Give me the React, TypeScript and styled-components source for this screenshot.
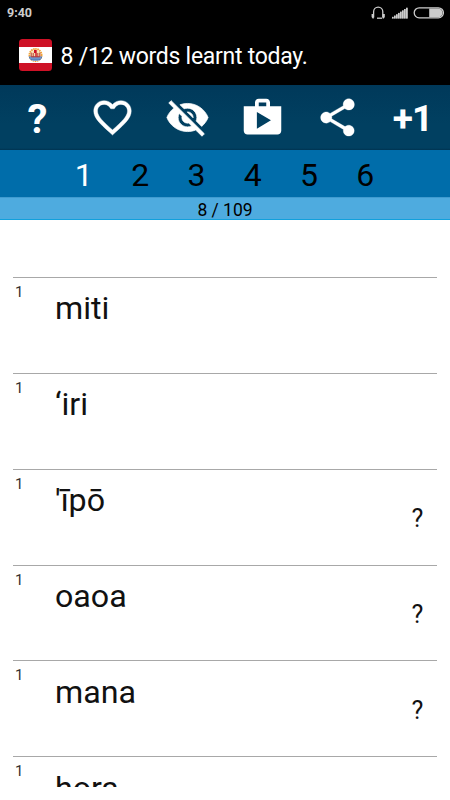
import React from 'react';
import styled, { createGlobalStyle } from 'styled-components';

const GlobalStyle = createGlobalStyle`
  * { box-sizing: border-box; }
  body { margin: 0; background: #fff; font-family: Roboto, "Noto Sans", sans-serif; }
`;

const Screen = styled.div`
  width: 450px;
  height: 800px;
  display: flex;
  flex-direction: column;
  overflow: hidden;
  background: #fff;
`;

const StatusBar = styled.div`
  height: 25px;
  flex: none;
  display: flex;
  align-items: center;
  justify-content: space-between;
  padding: 1px 6px 0 7px;
  background: #000;
  color: #cdcdcd;
`;

const Clock = styled.span`
  font-size: 12.5px;
  font-weight: 700;
  line-height: 24px;
`;

const StatusIcons = styled.svg`
  display: block;
`;

const TitleBar = styled.header`
  height: 60px;
  flex: none;
  display: flex;
  align-items: center;
  padding: 0 0 0 19px;
  background: #000;
`;

const Flag = styled.svg`
  width: 33px;
  height: 32px;
  margin-right: 8.6px;
`;

const Title = styled.h1`
  margin: 4px 0 0;
  color: #fff;
  font-size: 23px;
  font-weight: 400;
  letter-spacing: -0.27px;
  line-height: 30px;
  white-space: pre;
`;

const Toolbar = styled.div`
  height: 65px;
  flex: none;
  display: grid;
  grid-template-columns: repeat(6, 75px);
  background: linear-gradient(#00395a, #014061 60%, #014061 97%, #003351);
`;

const ToolButton = styled.button`
  display: flex;
  align-items: center;
  justify-content: center;
  padding: 0;
  border: 0;
  background: none;
  color: #fff;
  font: 700 38px Roboto, sans-serif;
`;

const ToolIcon = styled.svg<{ $outline: number }>`
  width: 45px;
  height: 45px;
  fill: currentColor;
  stroke: currentColor;
  stroke-width: ${p => p.$outline};
  stroke-linejoin: round;
`;

const QuestionMark = styled.span`
  font-size: 40px;
  line-height: 45px;
  padding-top: 3px;
`;

const PlusOne = styled.span`
  font-size: 37px;
  letter-spacing: -1px;
  line-height: 45px;
  padding-top: 2px;
`;

const Levels = styled.nav`
  height: 47px;
  flex: none;
  display: grid;
  grid-template-columns: repeat(6, 56.3px);
  justify-content: center;
  padding-right: 0.8px;
  background: #006daa;
`;

const Level = styled.span<{ $active?: boolean }>`
  color: ${p => (p.$active ? '#fff' : '#000')};
  font-size: 32px;
  line-height: 50px;
  text-align: center;
`;

const Progress = styled.div`
  height: 23px;
  flex: none;
  border-top: 1px solid #3f9bd0;
  border-bottom: 1px solid #12a0dc;
  background: #4eabdf;
  color: #000;
  font-size: 17.5px;
  line-height: 25px;
  text-align: center;
`;

const WordList = styled.main`
  height: 567px;
  flex: none;
  overflow: hidden;
  padding: 57px 13px 0;
`;

const WordRow = styled.div`
  height: 95.85px;
  display: grid;
  grid-template-columns: 42px 1fr 39px;
  border-top: 1px solid #a8a8a8;
  color: #111;
`;

const Stage = styled.span`
  padding: 5px 0 0 2px;
  font-size: 15px;
  line-height: 18px;
  color: #333;
`;

const Word = styled.span`
  font-size: 32.2px;
  line-height: 38px;
  padding-top: 11.4px;
`;

const Unknown = styled.span`
  font-size: 25px;
  line-height: 30px;
  padding-top: 34.4px;
  text-align: center;
`;

const words = [
  { text: 'miti', unknown: false },
  { text: '‘iri', unknown: false },
  { text: "'īpō", unknown: true },
  { text: 'oaoa', unknown: true },
  { text: 'mana', unknown: true },
  { text: 'hora', unknown: false },
];

const iconPaths = {
  heart:
    'M16.5 3c-1.74 0-3.41.81-4.5 2.09C10.91 3.81 9.24 3 7.5 3 4.42 3 2 5.42 2 8.5c0 3.78 3.4 6.86 8.55 11.54L12 21.35l1.45-1.32C18.6 15.36 22 12.28 22 8.5 22 5.42 19.58 3 16.5 3zm-4.4 15.55l-.1.1-.1-.1C7.14 14.24 4 11.39 4 8.5 4 6.5 5.5 5 7.5 5c1.54 0 3.04.99 3.57 2.36h1.87C13.46 5.99 14.96 5 16.5 5c2 0 3.5 1.5 3.5 3.5 0 2.89-3.14 5.74-7.9 10.05z',
  hide:
    'M12 7c2.76 0 5 2.24 5 5 0 .65-.13 1.26-.36 1.83l2.92 2.92c1.51-1.26 2.7-2.89 3.43-4.75-1.73-4.39-6-7.5-11-7.5-1.4 0-2.74.25-3.98.7l2.16 2.16C10.74 7.13 11.35 7 12 7zM2 4.27l2.28 2.28.46.46C3.08 8.3 1.78 10.02 1 12c1.73 4.39 6 7.5 11 7.5 1.55 0 3.03-.3 4.38-.84l.42.42L19.73 22 21 20.73 3.27 3 2 4.27zM7.53 9.8l1.55 1.55c-.05.21-.08.43-.08.65 0 1.66 1.34 3 3 3 .22 0 .44-.03.65-.08l1.55 1.55c-.67.33-1.41.53-2.2.53-2.76 0-5-2.24-5-5 0-.79.2-1.53.53-2.2zm4.31-.78l3.15 3.15.02-.16c0-1.66-1.34-3-3-3l-.17.01z',
  shop:
    'M16 6V4c0-1.11-.89-2-2-2h-4c-1.11 0-2 .89-2 2v2H2v13c0 1.11.89 2 2 2h16c1.11 0 2-.89 2-2V6h-6zm-6-2h4v2h-4V4zM9 18V9l7.5 4.5L9 18z',
  share:
    'M18 16.08c-.76 0-1.44.3-1.96.77L8.91 12.7c.05-.23.09-.46.09-.7s-.04-.47-.09-.7l7.05-4.11c.54.5 1.25.81 2.04.81 1.66 0 3-1.34 3-3s-1.34-3-3-3-3 1.34-3 3c0 .24.04.47.09.7L8.04 9.81C7.5 9.31 6.79 9 6 9c-1.66 0-3 1.34-3 3s1.34 3 3 3c.79 0 1.5-.31 2.04-.81l7.12 4.16c-.05.21-.08.43-.08.65 0 1.61 1.31 2.92 2.92 2.92 1.61 0 2.92-1.31 2.92-2.92s-1.31-2.92-2.92-2.92z',
};

const Icon = ({ d, outline = 0 }: { d: string; outline?: number }) => (
  <ToolIcon viewBox="0 0 24 24" $outline={outline}>
    <path d={d} />
  </ToolIcon>
);

const signalBars = [0, 1, 2, 3, 4, 5, 6, 7];

export default function App() {
  return (
    <>
      <GlobalStyle />
      <Screen>
        <StatusBar>
          <Clock>9:40</Clock>
          <StatusIcons width="73" height="14" viewBox="0 0 73 14">
            <g fill="none" stroke="#cdcdcd" strokeWidth="1.3">
              <path d="M2.6 11.6V5.8a4.6 4.6 0 0 1 9.2 0v5.8" />
              <path d="M6 12.2h5" />
              <rect x="43.2" y="1.8" width="29.2" height="10" rx="5" />
            </g>
            <path d="M.6 8h2.2v4.6H1.6L.6 11zM13.8 8h-2.2v4.6h1.2l1-1.6z" fill="#cdcdcd" />
            <path d="M58.2 2.4h9a4.4 4.4 0 0 1 0 8.8h-9z" fill="#cdcdcd" />
            {signalBars.map(i => (
              <rect key={i} x={21 + i * 2} y={10.8 - i * 1.3} width="1.5" height={1.7 + i * 1.3} fill="#cdcdcd" />
            ))}
            <path d="M20.5 12.5L37 1.5v11z" fill="#cdcdcd" opacity=".6" />
          </StatusIcons>
        </StatusBar>

        <TitleBar>
          <Flag viewBox="0 0 33 32">
            <rect width="33" height="32" rx="3.5" fill="#ce1126" />
            <rect y="8" width="33" height="16" fill="#fff" />
            <circle cx="16.5" cy="16" r="6" fill="none" stroke="#f0a136" strokeWidth="2" strokeDasharray="1.5 .6" />
            <circle cx="16.5" cy="16" r="4.8" fill="#f7dfae" />
            <path d="M9.7 17.5h13.6a7 6 0 0 1-13.6 0z" fill="#3d6db5" />
            <path d="M11 19h11M12.5 21.2h8" stroke="#c9d8ef" strokeWidth=".7" />
            <path d="M12.2 13.5v4.3h8.6v-4.3M14.2 14v4M18.8 14v4" fill="none" stroke="#b83b36" strokeWidth="1" />
            <path d="M15 11h2.7v6.5h-1.4V14H15z" fill="#ce1126" />
          </Flag>
          <Title>8 /12 words learnt today.</Title>
        </TitleBar>

        <Toolbar>
          <ToolButton><QuestionMark>?</QuestionMark></ToolButton>
          <ToolButton><Icon d={iconPaths.heart} outline={0.2} /></ToolButton>
          <ToolButton><Icon d={iconPaths.hide} outline={0.4} /></ToolButton>
          <ToolButton><Icon d={iconPaths.shop} /></ToolButton>
          <ToolButton><Icon d={iconPaths.share} outline={0.15} /></ToolButton>
          <ToolButton><PlusOne>+1</PlusOne></ToolButton>
        </Toolbar>

        <Levels>
          {[1, 2, 3, 4, 5, 6].map(n => (
            <Level key={n} $active={n === 1}>{n}</Level>
          ))}
        </Levels>
        <Progress>8 / 109</Progress>

        <WordList>
          {words.map(w => (
            <WordRow key={w.text}>
              <Stage>1</Stage>
              <Word>{w.text}</Word>
              {w.unknown && <Unknown>?</Unknown>}
            </WordRow>
          ))}
        </WordList>
      </Screen>
    </>
  );
}
